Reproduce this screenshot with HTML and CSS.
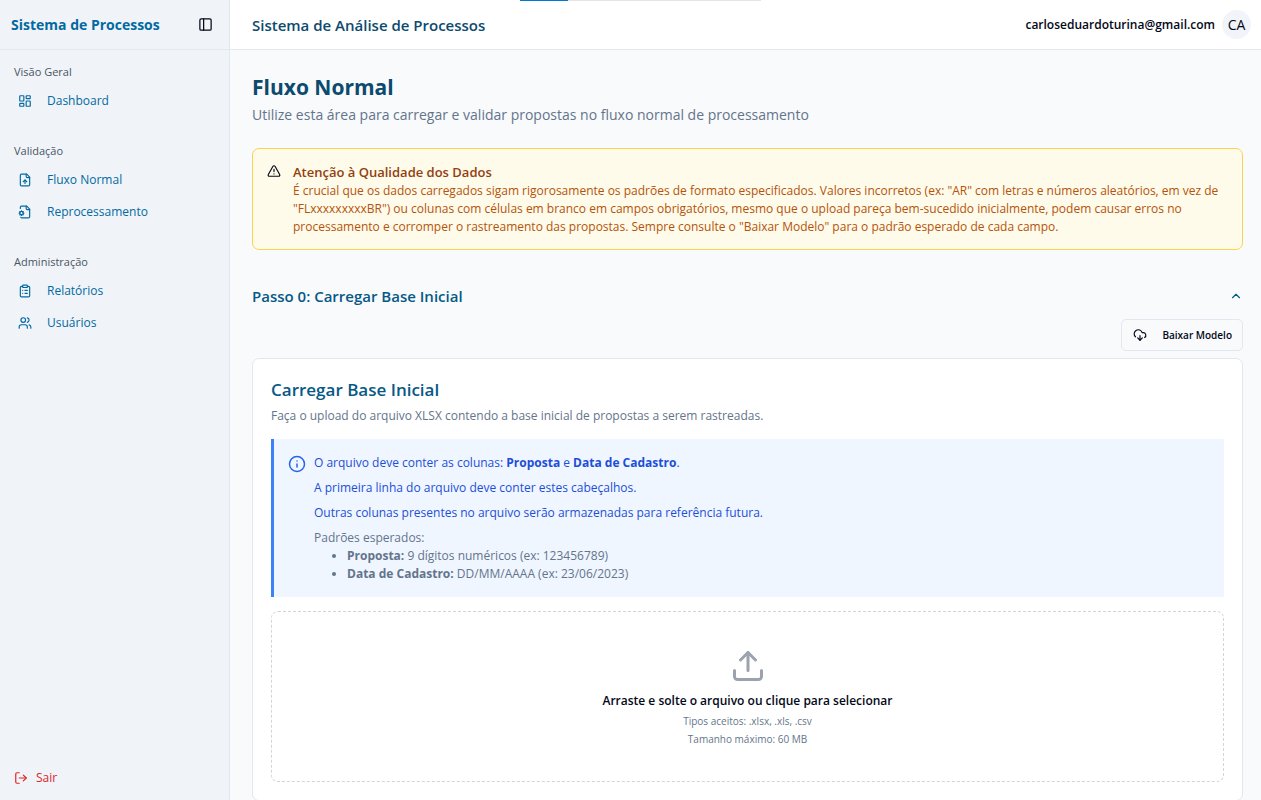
FILE: index.html
```html
<!DOCTYPE html>
<html lang="pt-BR">
<head>
<meta charset="utf-8">
<meta name="viewport" content="width=device-width, initial-scale=1">
<title>Sistema de Análise de Processos</title>
<link rel="stylesheet" href="styles.css">
</head>
<body>
<div class="app">
  <div class="progress"><div class="progress-fill"></div></div>
  <aside class="sidebar">
    <div class="sidebar-head">
      <span class="brand">Sistema de Processos</span>
      <button class="icon-button" type="button" aria-label="Alternar menu">
        <svg class="icon" viewBox="0 0 24 24"><rect x="3" y="3" width="18" height="18" rx="2"/><path d="M9 3v18"/></svg>
      </button>
    </div>
    <nav class="nav">
      <section class="group">
        <h2 class="group-title">Visão Geral</h2>
        <a class="nav-link" href="#dashboard">
          <svg class="icon" viewBox="0 0 24 24"><rect x="3" y="3" width="7" height="9" rx="1"/><rect x="14" y="3" width="7" height="5" rx="1"/><rect x="14" y="12" width="7" height="9" rx="1"/><rect x="3" y="16" width="7" height="5" rx="1"/></svg>
          Dashboard</a>
      </section>
      <section class="group">
        <h2 class="group-title">Validação</h2>
        <a class="nav-link" href="#fluxo">
          <svg class="icon" viewBox="0 0 24 24"><path d="M15 2H6a2 2 0 0 0-2 2v16a2 2 0 0 0 2 2h12a2 2 0 0 0 2-2V7Z"/><path d="M14 2v4a2 2 0 0 0 2 2h4"/><path d="M12 12v6"/><path d="m15 15-3-3-3 3"/></svg>
          Fluxo Normal</a>
        <a class="nav-link" href="#reprocessamento">
          <svg class="icon" viewBox="0 0 24 24"><path d="M14 2v4a2 2 0 0 0 2 2h4"/><path d="M4.7 21.1A2 2 0 0 0 6 22h12a2 2 0 0 0 2-2V7l-5-5H6a2 2 0 0 0-2 2v2"/><circle cx="6" cy="14" r="3"/><path d="M6 10v1M6 17v1M10 14H9M3 14H2M8.8 11.2l-.7.7M3.9 16.1l-.7.7M8.8 16.8l-.7-.7M3.9 11.9l-.7-.7"/></svg>
          Reprocessamento</a>
      </section>
      <section class="group">
        <h2 class="group-title">Administração</h2>
        <a class="nav-link" href="#relatorios">
          <svg class="icon" viewBox="0 0 24 24"><rect x="8" y="2" width="8" height="4" rx="1"/><path d="M16 4h2a2 2 0 0 1 2 2v14a2 2 0 0 1-2 2H6a2 2 0 0 1-2-2V6a2 2 0 0 1 2-2h2"/><path d="M12 11h4M12 16h4M8 11h.01M8 16h.01"/></svg>
          Relatórios</a>
        <a class="nav-link" href="#usuarios">
          <svg class="icon" viewBox="0 0 24 24"><path d="M16 21v-2a4 4 0 0 0-4-4H6a4 4 0 0 0-4 4v2"/><circle cx="9" cy="7" r="4"/><path d="M22 21v-2a4 4 0 0 0-3-3.87"/><path d="M16 3.13a4 4 0 0 1 0 7.75"/></svg>
          Usuários</a>
      </section>
    </nav>
    <button class="logout" type="button">
      <svg class="icon" viewBox="0 0 24 24"><path d="M9 21H5a2 2 0 0 1-2-2V5a2 2 0 0 1 2-2h4"/><path d="m16 17 5-5-5-5"/><path d="M21 12H9"/></svg>
      Sair
    </button>
  </aside>
  <div class="page">
    <header class="topbar">
      <span class="topbar-title">Sistema de Análise de Processos</span>
      <div class="user">
        <span class="email">carloseduardoturina@gmail.com</span>
        <span class="avatar">CA</span>
      </div>
    </header>
    <main class="content">
      <h1 class="title">Fluxo Normal</h1>
      <p class="subtitle">Utilize esta área para carregar e validar propostas no fluxo normal de processamento</p>
      <div class="alert" role="alert">
        <svg class="icon" viewBox="0 0 24 24"><path d="m21.73 18-8-14a2 2 0 0 0-3.48 0l-8 14A2 2 0 0 0 4 21h16a2 2 0 0 0 1.73-3"/><path d="M12 9v4M12 17h.01"/></svg>
        <div>
          <h2 class="alert-title">Atenção à Qualidade dos Dados</h2>
          <p class="alert-text">É crucial que os dados carregados sigam rigorosamente os padrões de formato especificados. Valores incorretos (ex: "AR" com letras e números aleatórios, em vez de "FLxxxxxxxxxBR") ou colunas com células em branco em campos obrigatórios, mesmo que o upload pareça bem-sucedido inicialmente, podem causar erros no processamento e corromper o rastreamento das propostas. Sempre consulte o "Baixar Modelo" para o padrão esperado de cada campo.</p>
        </div>
      </div>
      <button class="step" type="button" aria-expanded="true">
        Passo 0: Carregar Base Inicial
        <svg class="icon" viewBox="0 0 24 24"><path d="m18 15-6-6-6 6"/></svg>
      </button>
      <div class="actions">
        <button class="download" type="button">
          <svg class="icon" viewBox="0 0 24 24"><path d="M12 13v8l-4-4"/><path d="m12 21 4-4"/><path d="M4.393 15.269A7 7 0 1 1 15.71 8h1.79a4.5 4.5 0 0 1 2.436 8.284"/></svg>
          Baixar Modelo
        </button>
      </div>
      <section class="card">
        <h2 class="card-title">Carregar Base Inicial</h2>
        <p class="card-text">Faça o upload do arquivo XLSX contendo a base inicial de propostas a serem rastreadas.</p>
        <div class="info">
          <svg class="icon" viewBox="0 0 24 24"><circle cx="12" cy="12" r="10"/><path d="M12 16v-4M12 8h.01"/></svg>
          <div class="info-body">
            <p>O arquivo deve conter as colunas: <strong>Proposta</strong> e <strong>Data de Cadastro</strong>.</p>
            <p>A primeira linha do arquivo deve conter estes cabeçalhos.</p>
            <p>Outras colunas presentes no arquivo serão armazenadas para referência futura.</p>
            <div class="patterns">
              Padrões esperados:
              <ul>
                <li><strong>Proposta:</strong> 9 dígitos numéricos (ex: 123456789)</li>
                <li><strong>Data de Cadastro:</strong> DD/MM/AAAA (ex: 23/06/2023)</li>
              </ul>
            </div>
          </div>
        </div>
        <button class="dropzone" type="button">
          <svg class="icon" viewBox="0 0 24 24"><path d="M21 15v4a2 2 0 0 1-2 2H5a2 2 0 0 1-2-2v-4"/><path d="m17 8-5-5-5 5"/><path d="M12 3v12"/></svg>
          <span class="drop-title">Arraste e solte o arquivo ou clique para selecionar</span>
          <span class="drop-hint">Tipos aceitos: .xlsx, .xls, .csv</span>
          <span class="drop-hint">Tamanho máximo: 60 MB</span>
        </button>
      </section>
    </main>
  </div>
</div>
</body>
</html>
```
FILE: styles.css
```css
* { box-sizing: border-box; }
body, h1, h2, p, ul { margin: 0; padding: 0; }
body {
  font: 12px/18px "Open Sans", "Noto Sans", sans-serif;
  color: #020817;
  background: #f8fafc;
}
button {
  font: inherit;
  color: inherit;
  background: none;
  border: 0;
  padding: 0;
  cursor: pointer;
}
.icon {
  width: 14px;
  height: 14px;
  flex: none;
  fill: none;
  stroke: currentColor;
  stroke-width: 2;
  stroke-linecap: round;
  stroke-linejoin: round;
}
.app { display: flex; height: 100vh; }

.progress {
  position: absolute;
  top: 0;
  left: 520px;
  width: 241px;
  height: 1px;
  background: #e5e5e5;
}
.progress-fill { width: 20%; height: 1px; background: #0078d4; }

.sidebar {
  width: 230px;
  flex: none;
  display: flex;
  flex-direction: column;
  background: #f0f4f8;
  border-right: 1px solid #e2e8f0;
}
.sidebar-head {
  height: 50px;
  flex: none;
  display: flex;
  align-items: center;
  justify-content: space-between;
  padding: 0 16px 0 11px;
  border-bottom: 1px solid #e2e8f0;
}
.brand { font-size: 14px; font-weight: 700; color: #0369a1; }
.icon-button { display: flex; }
.icon-button .icon { width: 15px; height: 15px; }
.nav { flex: 1; padding: 6px 7px; }
.group { padding: 7px; margin-bottom: 10px; }
.group-title {
  font-size: 11px;
  line-height: 18px;
  font-weight: 400;
  color: #4b5563;
  margin-bottom: 5px;
}
.nav-link {
  display: flex;
  align-items: center;
  gap: 15px;
  height: 29px;
  padding-left: 4px;
  margin-bottom: 3px;
  color: #0369a1;
  text-decoration: none;
}
.logout {
  display: flex;
  align-items: center;
  gap: 8px;
  padding: 0 14px 13px;
  color: #dc2626;
}

.page { flex: 1; min-width: 0; display: flex; flex-direction: column; }
.topbar {
  height: 50px;
  flex: none;
  display: flex;
  align-items: center;
  justify-content: space-between;
  padding: 0 10px 0 22px;
  background: #fff;
  border-bottom: 1px solid #e2e8f0;
}
.topbar-title { font-size: 15px; font-weight: 600; color: #0c4a6e; }
.user { display: flex; align-items: center; gap: 7px; }
.email { font-weight: 600; }
.avatar {
  display: grid;
  place-items: center;
  width: 29px;
  height: 29px;
  border-radius: 50%;
  background: #f1f5f9;
  font-size: 14px;
}

.content { flex: 1; overflow: hidden auto; padding: 22px 18px 0 22px; scrollbar-width: none; }
.title { font-size: 21px; line-height: 30px; color: #0c4a6e; }
.subtitle { font-size: 14px; line-height: 22px; margin-top: 2px; color: #64748b; }
.alert {
  display: flex;
  gap: 12px;
  margin-top: 22px;
  padding: 14px 14px 13px;
  border: 1px solid #fcd34d;
  border-radius: 7px;
  background: #fffbeb;
}
.alert .icon { margin-top: 1px; }
.alert-title { font-size: 13px; line-height: 18px; margin-bottom: 1px; font-weight: 600; color: #92400e; }
.alert-text { color: #b45309; }
.step {
  display: flex;
  align-items: center;
  justify-content: space-between;
  width: 100%;
  height: 40px;
  margin-top: 26px;
  font-size: 15px;
  font-weight: 600;
  color: #075985;
}
.actions { display: flex; justify-content: flex-end; margin-top: 3px; }
.download {
  display: flex;
  align-items: center;
  gap: 15px;
  height: 32px;
  padding: 0 10px 0 11px;
  border: 1px solid #e2e8f0;
  border-radius: 5px;
  font-size: 10px;
  font-weight: 600;
}
.card {
  margin-top: 7px;
  padding: 18px;
  border: 1px solid #e2e8f0;
  border-radius: 7px;
  background: #fff;
}
.card-title { font-size: 17px; line-height: 25px; font-weight: 600; color: #075985; }
.card-text { margin-top: 5px; color: #64748b; }
.info {
  display: flex;
  gap: 8px;
  margin-top: 14px;
  padding: 15px 14px 14px;
  border-left: 3px solid #3b82f6;
  background: #eff6ff;
  color: #1d4ed8;
}
.info .icon { width: 18px; height: 18px; margin-top: 1px; color: #2563eb; }
.info-body { display: grid; gap: 7px; }
.patterns { color: #64748b; }
.patterns ul { padding-left: 33px; }
.dropzone {
  display: flex;
  flex-direction: column;
  align-items: center;
  width: 100%;
  margin-top: 14px;
  padding: 36px 16px 33px;
  border: 1px dashed #d1d5db;
  border-radius: 7px;
}
.dropzone .icon { width: 36px; height: 36px; color: #9ca3af; }
.drop-title { margin: 8px 0 2px; font-weight: 600; }
.drop-hint { font-size: 10px; line-height: 18px; color: #64748b; }
```
